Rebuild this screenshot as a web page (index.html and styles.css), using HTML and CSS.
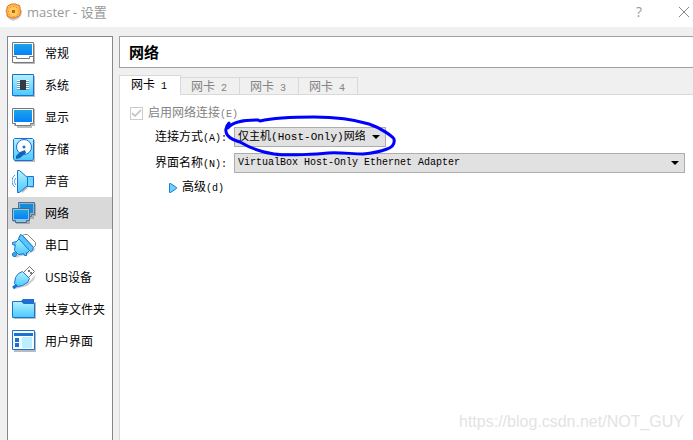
FILE: index.html
```
<!DOCTYPE html>
<html lang="zh-CN">
<head>
    <meta charset="UTF-8">
    <title>master - 设置</title>
    <link rel="stylesheet" href="styles.css">
</head>
<body>
<div class="window">
    <div class="titlebar">
        <svg class="logo" width="18" height="18" viewBox="0 0 18 18">
            <path d="M7 3h5l3 2 2 4-1 4-3 3-5 2-4-2-3-4z" fill="#ccc"/>
            <path d="M6 1h5l1 1h2l1 2v2l1 2-1 3v1l-2 2h-2l-1 1H6l-1-1H3l-1-2v-2L1 8l1-2V4l2-2h1z" fill="#ffb84a" stroke="#e4702c"/>
            <circle cx="8.500" cy="8.500" r="4.500" fill="#ffcf5e"/>
            <path d="M7 7h3v3H7z" fill="#d6551e"/>
            <path d="M5 4h1v1H5zM11 4h1v1h-1zM4 11h1v1H4zM12 11h1v1h-1zM8 3h1v1H8zM8 13h1v1H8zM3 8h1v1H3zM13 8h1v1h-1z" fill="#ee8a35"/>
        </svg>
        <span class="title">master - 设置</span>
        <button class="win-btn" type="button" aria-label="帮助">?</button>
        <button class="win-btn" type="button" aria-label="关闭">
            <svg width="12" height="12" viewBox="0 0 12 12"><path d="M1 1l10 10M11 1L1 11" stroke="#888" fill="none"/></svg>
        </button>
    </div>

    <div class="content">
        <ul class="sidebar">
            <li><a href="#general">
                <svg class="icon" viewBox="0 0 24 24">
                    <path d="M2 2h21v20H2z" fill="#bbb"/>
                    <path d="M.5.5h21v20H.5z" fill="#fff" stroke="#777"/>
                    <path d="M2 2h18v11H2z" fill="url(#screen)"/>
                    <path d="M.5 14.500h4v2h13v-2h4" fill="none" stroke="#777"/>
                </svg>
                常规</a></li>
            <li><a href="#system">
                <svg class="icon" viewBox="0 0 24 24">
                    <path d="M2 2h21v21H2z" fill="#bbb"/>
                    <path d="M.5.5h21v21H.5z" fill="url(#light)" stroke="#1b70d2"/>
                    <path d="M5 6h12v1H5zM5 8h12v1H5zM5 10h12v1H5zM5 12h12v1H5zM5 14h12v1H5z" fill="#fff"/>
                    <path d="M5 7h12v1H5zM5 9h12v1H5zM5 11h12v1H5zM5 13h12v1H5zM5 15h12v1H5z" fill="#6b9bb2"/>
                    <path d="M8 6h6v10H8z" fill="#303b49"/>
                </svg>
                系统</a></li>
            <li><a href="#display">
                <svg class="icon" viewBox="0 0 24 24">
                    <path d="M2 3h21v17h-3v2H5v-2H2z" fill="#bbb"/>
                    <path d="M.5 2.500h21v15h-3v2h-15v-2h-3z" fill="#fff" stroke="#777"/>
                    <path d="M2 4h18v12H2z" fill="url(#screen)"/>
                </svg>
                显示</a></li>
            <li><a href="#storage">
                <svg class="icon" viewBox="0 0 24 24">
                    <path d="M3 2h20v22H3z" fill="#bbb"/>
                    <path d="M2.500.5h18l1 1v19l-1 2h-18l-1-2v-19z" fill="url(#light)" stroke="#1b70d2"/>
                    <circle cx="12" cy="9" r="7.500" fill="#fff" stroke="#1b70d2"/>
                    <circle cx="12" cy="9" r="1.500" fill="#1b70d2"/>
                    <path d="M13 12l1 3-6 5-4 1v-3l4-4z" fill="#1464b9"/>
                </svg>
                存储</a></li>
            <li><a href="#audio">
                <svg class="icon" viewBox="0 0 24 24">
                    <path d="M7 9l3-3 6 12 6-1v1h-6l-6 5z" fill="#bbb"/>
                    <path d="M3 5C-1 8-1 14 3 17M4 8c-2 2-2 5 0 7" fill="none" stroke="#368ee3"/>
                    <path d="M5.500.5h2l8 7v8l-8 7h-2z" fill="url(#light)" stroke="#1b70d2"/>
                    <path d="M15.500 6.500h6v10h-6z" fill="#70d8ff" stroke="#1b70d2"/>
                </svg>
                声音</a></li>
            <li class="current"><a href="#network">
                <svg class="icon" viewBox="0 0 24 24">
                    <path d="M7 2h17v12h-2v3h-4v5H4v-2H1V9h6z" fill="#aaa"/>
                    <path d="M6.500.5h16v12h-3v2h-13z" fill="#8ab4d4" stroke="#4c7394"/>
                    <path d="M8 2h13v9H8z" fill="#168bd8"/>
                    <path d="M.5 6.500h17v12h-3v2h-11v-2h-3z" fill="#8fc4e7" stroke="#426d91"/>
                    <path d="M2 8h14v9H2z" fill="url(#screen)"/>
                </svg>
                网络</a></li>
            <li><a href="#serial">
                <svg class="icon" viewBox="0 0 24 24">
                    <path d="M3 22l5-2h6l6-4 4-2-2 3-7 4-6 1-5 2z" fill="#ccc"/>
                    <path d="M10.500 1.500l2-1h3l8 8v3l-2 2z" fill="#fff" stroke="#888"/>
                    <path d="M3.500 8.500l5-5 11 11-5 5-8 1-4-4z" fill="url(#light)" stroke="#1b70d2"/>
                    <path d="M8.500.5l2 1 11 12-1 3-2 1-12-13z" fill="#55c7fa" stroke="#1b70d2"/>
                    <path d="M4.500 7.500l-4 1v2l3 1M14.500 18.500v3h-2l-1-2" fill="#55c7fa" stroke="#1b70d2"/>
                    <path d="M3.500 17.500l-3 2v2l1 1h2l2-3z" fill="#33aae6" stroke="#1b70d2"/>
                </svg>
                串口</a></li>
            <li><a href="#usb">
                <svg class="icon" viewBox="0 0 24 24">
                    <path d="M3 22l3-2 7-1 6-5 5-6-2 6-7 6-8 2-4 1z" fill="#ccc"/>
                    <path d="M11.500 6.500l6-6 5 5-6 6z" fill="#fff" stroke="#777"/>
                    <path d="M16 4h2v2h-2zM18 6h2v2h-2z" fill="#777"/>
                    <path d="M10.500 5.500l7 7-2 4-5 3-5 1-3-3 1-6 3-4z" fill="url(#light)" stroke="#1b70d2"/>
                    <path d="M1 22l4-3" stroke="#1b70d2" stroke-width="3"/>
                </svg>
                USB设备</a></li>
            <li><a href="#shared">
                <svg class="icon" viewBox="0 0 24 24">
                    <path d="M2 4h22v17H2z" fill="#bbb"/>
                    <path d="M9 3l2-2h11v4H9z" fill="#1b70d2"/>
                    <path d="M.5 3.500h9l2 2h11v14H.5z" fill="url(#light)" stroke="#1b70d2"/>
                </svg>
                共享文件夹</a></li>
            <li><a href="#ui">
                <svg class="icon" viewBox="0 0 24 24">
                    <path d="M2 2h22v20H2z" fill="#bbb"/>
                    <path d="M.5.5h22v19H.5z" fill="#f4fcff" stroke="#1b70d2"/>
                    <path d="M2 3h19v3H2zM3 8h4v4H3zM3 13h4v4H3z" fill="#1b70d2"/>
                    <path d="M10 7h10v11H10z" fill="#bdeeff"/>
                </svg>
                用户界面</a></li>
        </ul>

        <div class="main">
            <h1>网络</h1>
            <div class="tabs" role="tablist">
                <button class="tab active" type="button" role="tab" aria-selected="true">网卡<span class="en"> 1</span></button>
                <button class="tab" type="button" role="tab">网卡<span class="en"> 2</span></button>
                <button class="tab" type="button" role="tab">网卡<span class="en"> 3</span></button>
                <button class="tab" type="button" role="tab">网卡<span class="en"> 4</span></button>
            </div>
            <div class="panel">
                <div class="enable">
                    <input type="checkbox" id="enable" checked disabled>
                    <label for="enable">启用网络连接<span class="en">(E)</span></label>
                </div>
                <div class="form">
                    <label for="attach">连接方式<span class="en">(A):</span></label>
                    <div class="field marked">
                        <select id="attach" class="attach">
                            <option>仅主机(Host-Only)网络</option>
                        </select>
                        <svg class="mark" width="174" height="46" viewBox="0 0 174 46">
                            <path d="M5 14C10 7 22 6 35 6l2 1C50 4 70 3 91 3c22 0 42 3 55 7 12 4 23 12 25 15 1 5-1 8-7 10-8 3-13 4-24 5-11 0-24-2-35-1-9 1-39 3-54 1-13-2-24-6-34-12C5 25 2 19 3 15c0-2 1-4 3-6"/>
                        </svg>
                    </div>
                    <label for="adapter">界面名称<span class="en">(N):</span></label>
                    <div class="field">
                        <select id="adapter" class="adapter">
                            <option>VirtualBox Host-Only Ethernet Adapter</option>
                        </select>
                    </div>
                </div>
                <button class="advanced" type="button">
                    <svg width="10" height="12" viewBox="0 0 10 12"><path d="M1.500 1.500v9h1l6-4v-1l-6-4z" fill="#6bd2ff" stroke="#187bd2"/></svg>
                    <span>高级<span class="en">(d)</span></span>
                </button>
            </div>
        </div>
    </div>
    <div class="watermark">https://blog.csdn.net/NOT_GUY</div>
</div>

<svg class="defs" width="0" height="0">
    <defs>
        <linearGradient id="screen" x1="0" y1="0" x2="0" y2="1">
            <stop offset="0" stop-color="#1ba5e8"/>
            <stop offset="1" stop-color="#0780f8"/>
        </linearGradient>
        <linearGradient id="light" x1="0" y1="0" x2="0" y2="1">
            <stop offset="0" stop-color="#b5f1ff"/>
            <stop offset="1" stop-color="#48caff"/>
        </linearGradient>
    </defs>
</svg>
</body>
</html>
```
FILE: styles.css
```
* {
    box-sizing: border-box;
    margin: 0;
    padding: 0;
}

body {
    background: #f0f0f0;
    color: #000;
    font-family: "Open Sans", "Noto Sans CJK SC", sans-serif;
    font-size: 12px;
    line-height: 16px;
}

button, select {
    font: inherit;
    color: inherit;
}

.window {
    position: relative;
    display: flex;
    flex-direction: column;
    min-height: 100vh;
    overflow: hidden;
}

.titlebar {
    display: flex;
    align-items: center;
    height: 27px;
    padding: 0 3px 4px 5px;
    background: #fff;
    color: #999;
    font-size: 13px;
}

.logo {
    margin-right: 4px;
}

.title {
    flex: 1;
}

.win-btn {
    display: flex;
    align-items: center;
    justify-content: center;
    width: 12px;
    height: 20px;
    margin-left: 33px;
    border: 0;
    background: none;
    font-size: 14px;
}

.content {
    display: flex;
    flex: 1;
    gap: 6px;
    padding: 9px 0 0 7px;
}

/* left menu */
.sidebar {
    flex: none;
    width: 106px;
    border: 1px solid #828790;
    border-bottom: 0;
    background: #fff;
    list-style: none;
}

.sidebar a {
    display: flex;
    align-items: center;
    gap: 9px;
    height: 32px;
    padding: 2px 0 0 4px;
    color: #000;
    text-decoration: none;
    white-space: nowrap;
}

.sidebar .current {
    background: #d9d9d9;
}

.icon {
    flex: none;
    width: 24px;
    height: 24px;
}

.main {
    display: flex;
    flex: 1;
    flex-direction: column;
    min-width: 0;
}

h1 {
    height: 32px;
    padding-left: 9px;
    border: 1px solid #a0a0a0;
    border-right: 0;
    background: #fff;
    font-family: "Noto Sans CJK SC", sans-serif;
    font-size: 15px;
    line-height: 30px;
}

.tabs {
    display: flex;
    align-items: flex-end;
    margin-top: 7px;
    border-bottom: 1px solid #d9d9d9;
    font-family: "Noto Sans CJK SC", sans-serif;
}

.tab {
    height: 17px;
    padding: 0 12px 0 10px;
    border: 1px solid #d9d9d9;
    border-width: 1px 1px 0 0;
    background: #f0f0f0;
    color: #838383;
    line-height: 16px;
}

.tab.active {
    height: 20px;
    margin-bottom: -1px;
    padding: 0 13px 0 11px;
    border-left-width: 1px;
    background: #fff;
    color: #000;
}

.en {
    font-family: "Liberation Mono", monospace;
    font-size: 10px;
    white-space: pre;
}

.panel {
    flex: 1;
    padding: 9px 8px 0 10px;
    border-left: 1px solid #d9d9d9;
    background: #fff;
    font-family: "Noto Sans CJK SC", sans-serif;
}

.enable {
    display: flex;
    align-items: center;
    gap: 5px;
    color: #838383;
}

.enable input {
    appearance: none;
    width: 13px;
    height: 13px;
    border: 1px solid #ccc;
    background: url("data:image/svg+xml,%3Csvg xmlns='http://www.w3.org/2000/svg' viewBox='0 0 11 11'%3E%3Cpath d='M1 5l3 3 6-6' fill='none' stroke='%23bbb' stroke-width='1.500'/%3E%3C/svg%3E");
}

.form {
    display: grid;
    grid-template-columns: auto 1fr;
    align-items: center;
    gap: 6px 7px;
    margin: 4px 0 0 25px;
}

.field {
    display: flex;
}

select {
    appearance: none;
    height: 20px;
    padding: 0 20px 0 3px;
    border: 1px solid #adadad;
    border-radius: 0;
    background: #e1e1e1 url("data:image/svg+xml,%3Csvg xmlns='http://www.w3.org/2000/svg' width='8' height='4'%3E%3Cpath d='M0 0h8L4 4z'/%3E%3C/svg%3E") no-repeat right 5px center;
    font-family: "Liberation Mono", "Noto Sans CJK SC", monospace;
    font-size: 10px;
}

.attach {
    width: 152px;
    font-size: 11px;
}

.adapter {
    width: 100%;
}

/* pen stroke round the drop-down */
.marked {
    position: relative;
}

.mark {
    position: absolute;
    left: -11px;
    top: -13px;
    fill: none;
    stroke: #00f;
    stroke-width: 3px;
    stroke-linecap: round;
    pointer-events: none;
}

.advanced {
    display: flex;
    align-items: center;
    gap: 4px;
    margin: 5px 0 0 38px;
    border: 0;
    background: none;
}

.watermark {
    position: absolute;
    right: 9px;
    bottom: 8px;
    color: #e3e3e3;
    font-family: "Liberation Sans", sans-serif;
    font-size: 16px;
    line-height: 20px;
}

.defs {
    position: absolute;
}
```
